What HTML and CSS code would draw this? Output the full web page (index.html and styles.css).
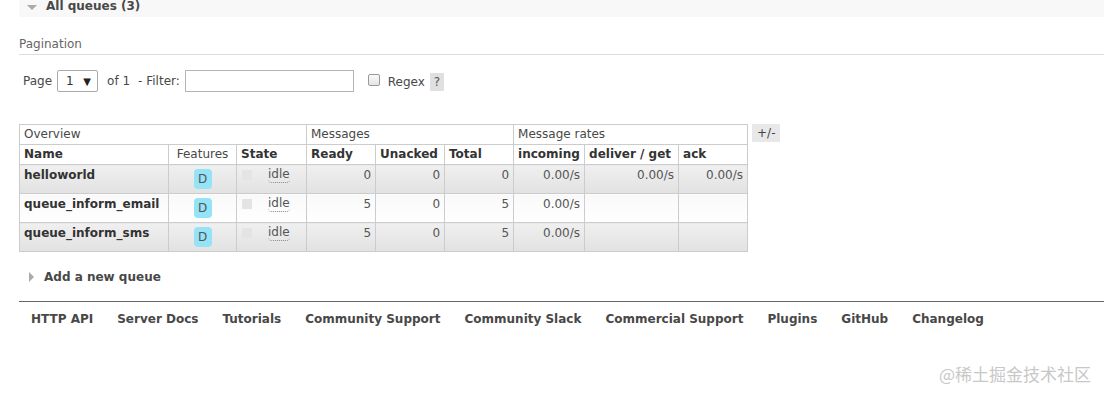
FILE: index.html
```html
<!DOCTYPE html>
<html>
<head>
<meta charset="utf-8">
<link rel="stylesheet" href="styles.css">
</head>
<body>
<div class="page">
  <div class="section-head"><span class="tri-down"></span><span>All queues (3)</span></div>

  <div class="pag-title">Pagination</div>

  <div class="filter-row">
    <span class="lbl">Page</span>
    <span class="select"><span>1</span><span class="arrow">▼</span></span>
    <span class="lbl of">of 1</span>
    <span class="lbl filter-lbl">- Filter:</span>
    <span class="input"></span>
    <span class="checkbox"></span>
    <span class="lbl regex">Regex</span>
    <span class="help">?</span>
  </div>

  <div class="table-wrap">
    <table class="list">
      <colgroup>
        <col style="width:149px"><col style="width:68px"><col style="width:70px">
        <col style="width:69px"><col style="width:69px"><col style="width:69px">
        <col style="width:71px"><col style="width:94px"><col style="width:69px">
      </colgroup>
      <thead>
        <tr class="group">
          <th colspan="3">Overview</th>
          <th colspan="3">Messages</th>
          <th colspan="3">Message rates</th>
        </tr>
        <tr class="cols">
          <th>Name</th>
          <th class="normal">Features</th>
          <th>State</th>
          <th>Ready</th>
          <th>Unacked</th>
          <th>Total</th>
          <th>incoming</th>
          <th>deliver / get</th>
          <th>ack</th>
        </tr>
      </thead>
      <tbody>
        <tr class="alt1">
          <td class="name">helloworld</td>
          <td class="center"><span class="badge">D</span></td>
          <td><span class="state"><span class="sq"></span><span class="idle">idle</span></span></td>
          <td class="r">0</td><td class="r">0</td><td class="r">0</td>
          <td class="r">0.00/s</td><td class="r">0.00/s</td><td class="r">0.00/s</td>
        </tr>
        <tr class="alt2">
          <td class="name">queue_inform_email</td>
          <td class="center"><span class="badge">D</span></td>
          <td><span class="state"><span class="sq"></span><span class="idle">idle</span></span></td>
          <td class="r">5</td><td class="r">0</td><td class="r">5</td>
          <td class="r">0.00/s</td><td class="r"></td><td class="r"></td>
        </tr>
        <tr class="alt1">
          <td class="name">queue_inform_sms</td>
          <td class="center"><span class="badge">D</span></td>
          <td><span class="state"><span class="sq"></span><span class="idle">idle</span></span></td>
          <td class="r">5</td><td class="r">0</td><td class="r">5</td>
          <td class="r">0.00/s</td><td class="r"></td><td class="r"></td>
        </tr>
      </tbody>
    </table>
    <span class="plusminus">+/-</span>
  </div>

  <div class="add-queue"><span class="tri-right"></span><span>Add a new queue</span></div>

  <div class="footer">
    <a>HTTP API</a>
    <a>Server Docs</a>
    <a>Tutorials</a>
    <a>Community Support</a>
    <a>Community Slack</a>
    <a>Commercial Support</a>
    <a>Plugins</a>
    <a>GitHub</a>
    <a>Changelog</a>
  </div>

  <div class="watermark">@稀土掘金技术社区</div>
</div>
</body>
</html>
```

FILE: styles.css
```css
html, body {
  margin: 0;
  padding: 0;
  background: #fff;
}
body {
  font-family: Verdana, "DejaVu Sans", sans-serif;
  font-size: 12px;
  color: #484848;
  overflow: hidden;
}
.page {
  padding-left: 19px;
  position: relative;
  height: 393px;
}
.section-head {
  display: flex;
  align-items: center;
  gap: 9px;
  height: 21px;
  margin-top: -4px;
  padding-left: 8px;
  background: #f8f8f8;
  font-weight: bold;
  font-size: 12px;
  color: #484848;
  line-height: 21px;
}
.tri-down {
  width: 0; height: 0;
  border-left: 5px solid transparent;
  border-right: 5px solid transparent;
  border-top: 5px solid #aaa;
  margin-top: 1px;
}
.pag-title {
  margin-top: 20px;
  padding-bottom: 3px;
  border-bottom: 1px solid #ddd;
  font-size: 12px;
  color: #666;
  line-height: 14px;
}
.filter-row {
  display: flex;
  align-items: center;
  margin-top: 15px;
  padding-left: 4px;
  height: 22px;
}
.lbl { color: #484848; }
.select {
  display: inline-flex;
  align-items: center;
  justify-content: space-between;
  box-sizing: border-box;
  width: 41px;
  height: 22px;
  margin-left: 5px;
  padding: 0 6px 0 8px;
  border: 1px solid #aaa;
  border-radius: 2px;
  color: #333;
}
.select .arrow { font-size: 10px; color: #222; }
.of { margin-left: 9px; }
.filter-lbl { margin-left: 8px; }
.input {
  display: inline-block;
  box-sizing: border-box;
  width: 169px;
  height: 22px;
  margin-left: 5px;
  border: 1px solid #b4b4b4;
  background: #fff;
}
.checkbox {
  display: inline-block;
  box-sizing: border-box;
  width: 12px;
  height: 12px;
  margin-left: 14px;
  margin-top: -3px;
  border: 1px solid #999;
  border-radius: 2px;
  background: linear-gradient(#fafafa, #e4e4e4);
}
.regex { margin-left: 8px; margin-top: 2px; }
.help {
  display: inline-block;
  margin-left: 5px;
  margin-top: 2px;
  padding: 0 4px;
  height: 18px;
  line-height: 18px;
  background: #e0e0e0;
  color: #555;
}
.table-wrap {
  display: flex;
  align-items: flex-start;
  margin-top: 32px;
  gap: 4px;
}
table.list {
  border-collapse: collapse;
  table-layout: fixed;
  width: 729px;
}
table.list th, table.list td {
  border: 1px solid #ccc;
  padding: 0 4px;
  text-align: left;
  white-space: nowrap;
  overflow: hidden;
}
table.list tr.group th {
  font-weight: normal;
  height: 19px;
  line-height: 19px;
  color: #484848;
}
table.list tr.cols th {
  font-weight: bold;
  height: 19px;
  line-height: 19px;
  color: #333;
}
table.list tr.cols th.normal { font-weight: normal; color: #484848; text-align: center; }
table.list td.center { text-align: center; }
table.list td {
  height: 29px;
  vertical-align: top;
  padding-top: 2px;
  line-height: 16px;
  box-sizing: border-box;
}
table.list td.r { text-align: right; color: #555; }
table.list td.name { font-weight: bold; color: #333; }
tr.alt1 td { background: linear-gradient(#f0f0f0, #e2e2e2); }
tr.alt2 td { background: linear-gradient(#f9f9f9, #ffffff); }
.badge {
  display: inline-block;
  width: 18px;
  height: 20px;
  margin-top: 2px;
  line-height: 21px;
  border-radius: 4px;
  background: #94e3f7;
  color: #555;
  text-align: center;
}
.state {
  display: flex;
  align-items: flex-start;
  gap: 16px;
  padding-left: 1px;
}
.sq {
  width: 10px;
  height: 10px;
  margin-top: 3px;
  background: #e4e4e4;
}
.idle {
  border-bottom: 1px dotted #888;
  border-radius: 0 0 4px 4px;
  line-height: 15px;
  color: #555;
}
.plusminus {
  display: inline-block;
  padding: 0 5px;
  height: 18px;
  line-height: 18px;
  background: #e8e8e8;
  color: #444;
}
.add-queue {
  display: flex;
  align-items: center;
  gap: 10px;
  margin-top: 17px;
  padding-left: 10px;
  font-weight: bold;
  font-size: 12px;
  color: #484848;
  height: 16px;
}
.tri-right {
  width: 0; height: 0;
  border-top: 5px solid transparent;
  border-bottom: 5px solid transparent;
  border-left: 5px solid #aaa;
}
.footer {
  display: flex;
  gap: 24px;
  margin-top: 16px;
  padding-top: 9px;
  padding-left: 12px;
  border-top: 1px solid #666;
  font-weight: bold;
  font-size: 12px;
  color: #484848;
  line-height: 16px;
}
.footer a { color: #484848; text-decoration: none; white-space: nowrap; }
.watermark {
  position: absolute;
  right: 13px;
  bottom: 3px;
  font-family: "Noto Sans CJK SC", sans-serif;
  font-size: 17px;
  color: #c8c8c8;
}
```
